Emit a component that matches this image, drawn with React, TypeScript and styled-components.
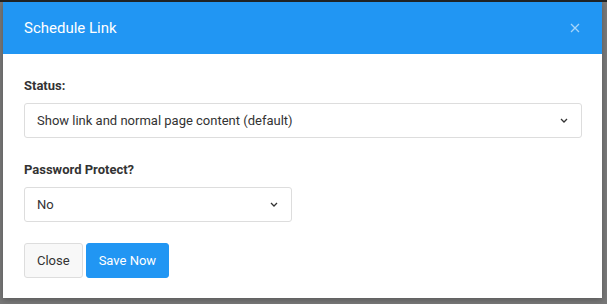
import React from "react"
import styled, { createGlobalStyle } from "styled-components"

const GlobalStyle = createGlobalStyle`
  html, body {
    margin: 0;
    padding: 0;
    background: #787878;
    font-family: Roboto, "Liberation Sans", Arial, sans-serif;
  }
`

const Backdrop = styled.div`
  width: 607px;
  height: 304px;
  overflow: hidden;
  border-top: 2px solid #1f2224;
  box-sizing: border-box;
  background: #787878;
`

const Modal = styled.div`
  margin-left: 3px;
  width: 599px;
  height: 296px;
  background: #fff;
  box-shadow: 0 2px 6px rgba(0, 0, 0, 0.25);
  display: flex;
  flex-direction: column;
`

const Header = styled.div`
  height: 53px;
  background: #2196f3;
  display: flex;
  align-items: center;
  justify-content: space-between;
  padding: 0 22px 0 21px;
`

const Title = styled.h4`
  margin: 0;
  font-size: 15px;
  font-weight: 400;
  color: #fff;
`

const CloseX = styled.button`
  border: 0;
  background: none;
  padding: 0;
  width: 10px;
  height: 10px;
  display: flex;
  cursor: pointer;
  opacity: 0.6;
`

const Body = styled.div`
  padding: 24px 21px 20px;
  display: flex;
  flex-direction: column;
`

const Field = styled.div`
  display: flex;
  flex-direction: column;

  & + & {
    margin-top: 24px;
  }
`

const Label = styled.label`
  font-size: 13px;
  font-weight: 700;
  color: #333;
  margin-bottom: 9px;
  line-height: 16px;
`

const Select = styled.div<{ $width: number }>`
  width: ${(p) => p.$width}px;
  height: 35px;
  box-sizing: border-box;
  border: 1px solid #ddd;
  border-radius: 3px;
  display: flex;
  align-items: center;
  justify-content: space-between;
  padding: 0 13px 0 12px;
  font-size: 13px;
  color: #333;
`

const Actions = styled.div`
  display: flex;
  gap: 3px;
  margin-top: 21px;
`

const Button = styled.button<{ $primary?: boolean }>`
  height: 35px;
  padding: 0 12px;
  border-radius: 3px;
  font-family: inherit;
  font-size: 13px;
  border: 1px solid ${(p) => (p.$primary ? "#2196f3" : "#ddd")};
  background: ${(p) => (p.$primary ? "#2196f3" : "#f8f8f8")};
  color: ${(p) => (p.$primary ? "#fff" : "#333")};
`

const Chevron = () => (
  <svg width="8" height="5" viewBox="0 0 8 5">
    <path d="M1 1l3 3 3-3" fill="none" stroke="#333" strokeWidth="1.3" />
  </svg>
)

export default function App() {
  return (
    <Backdrop>
      <GlobalStyle />
      <Modal>
        <Header>
          <Title>Schedule Link</Title>
          <CloseX aria-label="close">
            <svg width="10" height="10" viewBox="0 0 10 10">
              <path d="M1 1l8 8M9 1l-8 8" stroke="#fff" strokeWidth="1.3" />
            </svg>
          </CloseX>
        </Header>
        <Body>
          <Field>
            <Label>Status:</Label>
            <Select $width={558}>
              <span>Show link and normal page content (default)</span>
              <Chevron />
            </Select>
          </Field>
          <Field>
            <Label>Password Protect?</Label>
            <Select $width={268}>
              <span>No</span>
              <Chevron />
            </Select>
          </Field>
          <Actions>
            <Button>Close</Button>
            <Button $primary>Save Now</Button>
          </Actions>
        </Body>
      </Modal>
    </Backdrop>
  )
}
